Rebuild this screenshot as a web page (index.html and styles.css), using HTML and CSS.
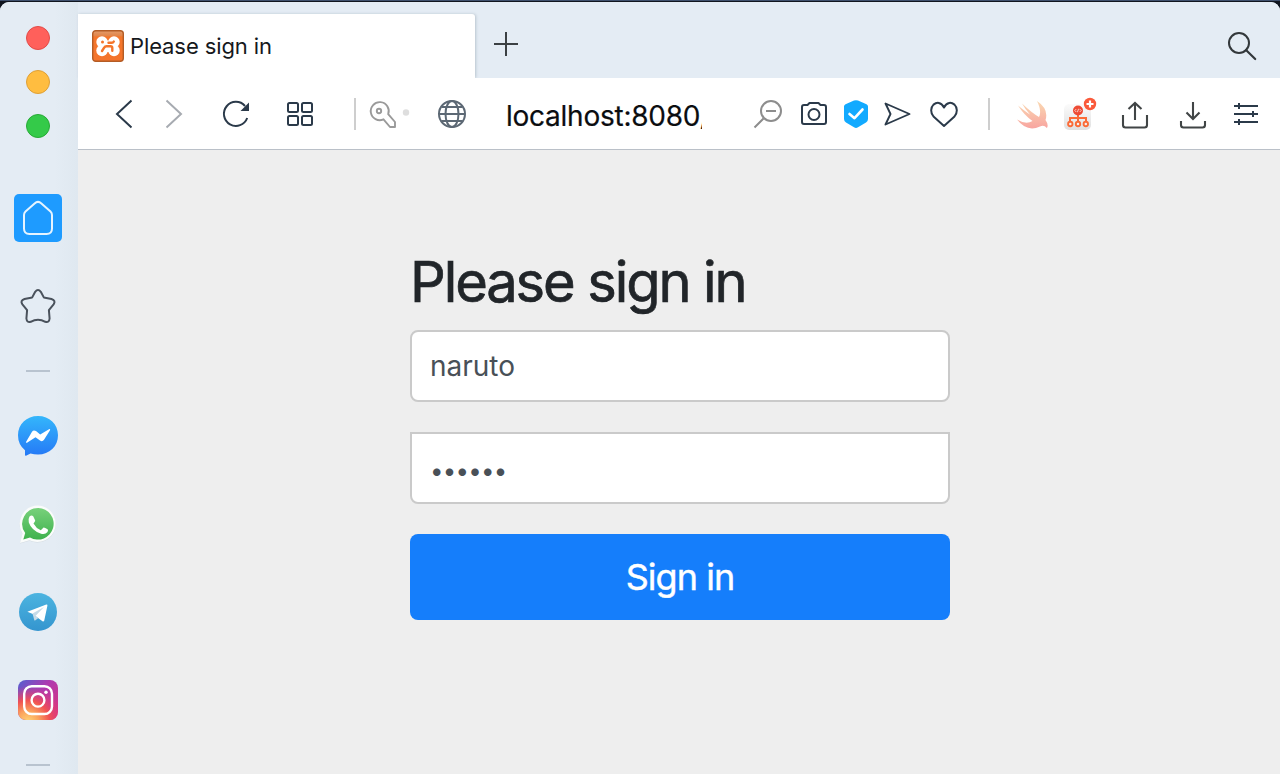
FILE: index.html
```html
<!DOCTYPE html>
<html lang="en">
<head>
<meta charset="utf-8">
<title>Please sign in</title>
<link rel="stylesheet" href="styles.css">
</head>
<body>
<div class="window">
  <aside class="sidebar">
    <div class="lights">
      <span class="light light-close"></span>
      <span class="light light-min"></span>
      <span class="light light-max"></span>
    </div>
    <div class="home">
      <svg width="48" height="48" viewBox="14 194 48 48"><path d="M34.6 203.4Q38 200.300 41.400 203.400L50.500 211.400Q52 212.800 52 215V228.500Q52 234 46.500 234H29.500Q24 234 24 228.500V215Q24 212.800 25.500 211.400Z" fill="none" stroke="#e6f4ff" stroke-width="2"/></svg>
    </div>
    <svg class="star" width="40" height="40" viewBox="18 286 40 40"><path d="M35.200 291.800Q38 288 40.800 291.800L43.800 297.400L51.500 299Q56.200 300.600 53.600 304.400L48.900 310.200L49.600 318.500Q49.200 322.800 45.300 321.800Q38 317.600 30.700 321.800Q26.800 322.800 26.400 318.500L27.100 310.200L22.400 304.400Q19.800 300.600 24.500 299L32.200 297.400Z" fill="none" stroke="#4a525c" stroke-width="2" stroke-linejoin="round"/></svg>
    <span class="rule"></span>
    <svg class="messenger" width="40" height="40" viewBox="0 0 40 40">
      <defs><linearGradient id="msg" x2="0" y2="1"><stop offset="0" stop-color="#34b6fb"/><stop offset="1" stop-color="#2579f6"/></linearGradient></defs>
      <path d="M20 0C31.500 0 40 8.200 40 19.300S31.500 38.600 20 38.600Q16 38.600 12.500 37.600L8 39.800Q7 40 7 39V34.300Q0 28.700 0 19.300C0 8.200 8.500 0 20 0Z" fill="url(#msg)"/>
      <path d="M8 26L14 15.700Q15.500 13.500 18 15L22.200 18.500L31 13.200Q32.600 12.700 32 14.200L26 23.700Q24.500 26 22 24.600L17.500 21.200L9 26.700Q7.700 27 8 26Z" fill="#fff"/>
    </svg>
    <svg class="whatsapp" width="40" height="40" viewBox="0 0 40 40">
      <defs><linearGradient id="wa" x2="0" y2="1"><stop offset="0" stop-color="#78d17b"/><stop offset="1" stop-color="#3fb24e"/></linearGradient></defs>
      <path d="M20 2A18.300 18.300 0 1 1 11.500 36.800L2 39.500L4.500 30A18.300 18.300 0 0 1 20 2Z" fill="#cbd3d8" opacity=".7"/>
      <path d="M20 1.500A18.300 18.300 0 1 1 11.500 36.300L2 39L4.500 29.500A18.300 18.300 0 0 1 20 1.500Z" fill="#fafcfb"/>
      <path d="M20.300 4A15.800 15.800 0 1 1 12 33.500L5.300 35.500L7.200 29A15.800 15.800 0 0 1 20.300 4Z" fill="url(#wa)"/>
      <path d="M11.500 12.600Q13.500 10.600 15.200 12.200L17.200 16.600Q17.200 17.800 15.500 19.500Q18 24.200 22.800 26.300L25.300 23.700Q26.200 23.200 29.600 25.200Q30.500 25.800 29.500 28Q27 31 22.500 29.500Q13.500 26.300 10.800 18.500Q10 15 11.500 12.600Z" fill="#fff"/>
    </svg>
    <svg class="telegram" width="38" height="38" viewBox="0 0 38 38">
      <defs><linearGradient id="tg" x2="0" y2="1"><stop offset="0" stop-color="#4cb4e0"/><stop offset="1" stop-color="#3495cf"/></linearGradient></defs>
      <circle cx="19" cy="19" r="19" fill="url(#tg)"/>
      <path d="M8.400 18.700L27.300 11.400Q28.700 11.200 28.400 12.700L25.200 27.800Q24.600 29 23.500 28.300L13.200 20.800Z" fill="#fff"/>
      <path d="M13.500 20.500L15.400 27.400Q15.900 27.800 16.400 27.300L19.400 25.100L16.500 22.900L25 14Z" fill="#c6dbe8"/>
    </svg>
    <svg class="instagram" width="40" height="40" viewBox="0 0 40 40">
      <defs>
        <linearGradient id="ig" x2="1" y2=".9"><stop offset="0" stop-color="#5260d1"/><stop offset=".45" stop-color="#ad3ab1"/><stop offset="1" stop-color="#de347c"/></linearGradient>
        <radialGradient id="igw" cx=".25" cy="1.050" r=".9"><stop offset="0" stop-color="#ffd776"/><stop offset=".3" stop-color="#fba45d"/><stop offset=".6" stop-color="#f05253"/><stop offset="1" stop-color="#df3b7b" stop-opacity="0"/></radialGradient>
      </defs>
      <rect width="40" height="40" rx="8" fill="url(#ig)"/><rect width="40" height="40" rx="8" fill="url(#igw)"/>
      <rect x="6.200" y="6.200" width="27.800" height="27.800" rx="7.500" fill="none" stroke="#fff" stroke-width="2.400"/>
      <circle cx="20" cy="20.200" r="6.400" fill="none" stroke="#fff" stroke-width="2.400"/><circle cx="28" cy="12.200" r="1.700" fill="#fff"/>
    </svg>
    <span class="rule rule-last"></span>
  </aside>

  <div class="main">
    <div class="tabbar">
      <div class="tab">
        <svg class="favicon" width="32" height="32" viewBox="0 0 32 32">
          <defs><linearGradient id="fav" x2="0" y2="1"><stop offset="0" stop-color="#e39b6b"/><stop offset=".16" stop-color="#e2864a"/><stop offset=".2" stop-color="#f4762b"/><stop offset="1" stop-color="#f4742c"/></linearGradient></defs>
          <rect x=".7" y=".7" width="30.600" height="30.600" rx="3" fill="url(#fav)" stroke="#b45c25" stroke-width="1.400"/>
          <g fill="#fff"><circle cx="10" cy="12" r="5.700"/><circle cx="22" cy="12" r="5.700"/><circle cx="10" cy="20.500" r="5.700"/><circle cx="22" cy="20.500" r="5.700"/><rect x="10" y="10.500" width="12" height="11.500"/></g>
          <circle cx="10.500" cy="12" r="1.500" fill="#f4752b"/>
          <path d="M10 21L12 17.800Q13 16.200 14.500 16.200H18.500Q20.300 16.200 20.300 18V20.800M21.800 11.500Q21 13 19.500 12.800H16.500" fill="none" stroke="#f4752b" stroke-width="2.400" stroke-linecap="round"/>
        </svg>
        <span class="tab-title">Please sign in</span>
      </div>
      <svg class="plus" width="24" height="24" viewBox="0 0 24 24"><path d="M12 0V24M0 12H24" stroke="#3b4043" stroke-width="2"/></svg>
      <svg class="search" width="32" height="32" viewBox="1226 30 32 32" fill="none" stroke="#33383b" stroke-width="2"><circle cx="1239" cy="43" r="10"/><path d="M1246 50L1255.200 59" stroke-width="2.200" stroke-linecap="round"/></svg>
    </div>

    <nav class="toolbar">
      <svg class="back" width="24" height="36" viewBox="112 96 24 36"><path d="M131.500 100.500L117 114L131.500 127.500" fill="none" stroke="#2b3a4a" stroke-width="2"/></svg>
      <svg class="forward" width="24" height="36" viewBox="162 96 24 36"><path d="M166.500 100.500L181 114L166.500 127.500" fill="none" stroke="#a7abb1" stroke-width="2"/></svg>
      <svg class="reload" width="32" height="36" viewBox="220 96 32 36"><path d="M247.200 118A12 12 0 1 1 245 106" fill="none" stroke="#2b3a4a" stroke-width="2"/><path d="M249 102.500V111H240.500Z" fill="#2b3a4a"/></svg>
      <svg class="grid" width="32" height="36" viewBox="284 96 32 36"><g fill="none" stroke="#2b3a4a" stroke-width="2"><rect x="288" y="103" width="10" height="9" rx="1.500"/><rect x="302" y="103" width="10" height="9" rx="1.500"/><rect x="288" y="116" width="10" height="9" rx="1.500"/><rect x="302" y="116" width="10" height="9" rx="1.500"/></g></svg>
      <span class="sep sep-left"></span>
      <svg class="key" width="42" height="36" viewBox="368 96 42 36"><g fill="none" stroke="#9a9a9a" stroke-width="1.900"><path d="M383.500 119.300A9 9 0 1 1 388.200 114.200L395 122V127H390Z" stroke-linejoin="round"/><circle cx="379" cy="111" r="2.200"/></g><circle cx="406" cy="112.500" r="3.200" fill="#dedede"/></svg>
      <svg class="globe" width="32" height="36" viewBox="436 96 32 36"><g fill="none" stroke="#5c6874" stroke-width="2"><circle cx="452" cy="114" r="13"/><ellipse cx="452" cy="114" rx="6.500" ry="13"/><path d="M439 114H465M441.500 107H462.500M441.500 121H462.500"/></g></svg>
      <span class="url">localhost:8080/</span>
      <svg class="zoomout" width="32" height="36" viewBox="752 96 32 36"><g fill="none" stroke="#8d8d8d" stroke-width="2"><circle cx="771" cy="111" r="10"/><path d="M763.500 118.500L754.500 127.500M766 111H776"/></g></svg>
      <svg class="camera" width="32" height="36" viewBox="798 96 32 36"><g fill="none" stroke="#2b3a4a" stroke-width="2"><path d="M804 105H807.500L809.500 103H818.500L820.500 105H824Q826 105 826 107V122Q826 124 824 124H804Q802 124 802 122V107Q802 105 804 105Z" stroke-linejoin="round"/><circle cx="814" cy="114.500" r="5.500"/></g></svg>
      <svg class="shield" width="28" height="36" viewBox="842 96 28 36"><path d="M854 100.600Q856 99.700 858 100.600L866.500 104.300Q868 105 868 106.500V119Q868 121.200 866 122.500L858 127.300Q856 128.500 854 127.300L846 122.500Q844 121.200 844 119V106.500Q844 105 845.500 104.300Z" fill="#12aaff"/><path d="M849.500 114L854.500 118.200L862.500 109.500" fill="none" stroke="#fff" stroke-width="2.600" stroke-linecap="round" stroke-linejoin="round"/></svg>
      <svg class="send" width="30" height="36" viewBox="882 96 30 36"><path d="M885.500 103.500L909.500 114L885.500 124.500L890.500 114Z" fill="none" stroke="#2b3a4a" stroke-width="1.900" stroke-linejoin="round"/></svg>
      <svg class="heart" width="32" height="36" viewBox="928 96 32 36"><path d="M944 107.500C941 101.500 936.500 102.200 933.500 104.600C930.500 107.500 930.300 112.500 933.500 116.500L944 126L954.500 116.500C957.700 112.500 957.500 107.500 954.500 104.600C951.500 102.200 947 101.500 944 107.500Z" fill="none" stroke="#2b3a4a" stroke-width="2" stroke-linejoin="round"/></svg>
      <span class="sep sep-right"></span>
      <svg class="swift" width="32" height="36" viewBox="1016 96 32 36">
        <defs><linearGradient id="sw" x2="0" y2="1"><stop offset="0" stop-color="#fad9b2"/><stop offset="1" stop-color="#f8a5a0"/></linearGradient></defs>
        <path d="M1037 101Q1049 109 1045.500 120Q1049 125 1046.800 128Q1044 124.500 1040 126.500Q1027 132.500 1017 119.500Q1026 125 1032.500 121Q1024 115 1018 105.500Q1026 112 1030 114.500Q1025 109 1022 103.500Q1032 113 1039 117Q1042 111 1037 101Z" fill="url(#sw)"/>
      </svg>
      <svg class="tree" width="38" height="36" viewBox="1062 96 38 36">
        <defs><linearGradient id="tile" x2="0" y2="1"><stop offset="0" stop-color="#fbfbfb"/><stop offset="1" stop-color="#e0e0e0"/></linearGradient></defs>
        <rect x="1064" y="104" width="27" height="26" rx="5" fill="url(#tile)"/>
        <path d="M1078 112V121M1070 121V118H1086V121" fill="none" stroke="#fb6b37" stroke-width="2"/>
        <g fill="#f4efed" stroke="#fb6b37" stroke-width="1.900"><circle cx="1070.300" cy="124" r="2.200"/><circle cx="1078" cy="124" r="2.200"/><circle cx="1085.800" cy="124" r="2.200"/></g>
        <circle cx="1078" cy="110.500" r="5" fill="#ee4b34"/><path d="M1076.300 109L1074.800 110.500L1076.300 112M1079.700 109L1081.200 110.500L1079.700 112M1078.600 108.800L1077.400 112.200" fill="none" stroke="#fff" stroke-width=".7"/>
        <circle cx="1090" cy="104" r="6.200" fill="#fa5a3b"/><path d="M1090 100.500V107.500M1086.500 104H1093.500" stroke="#fff" stroke-width="2.200"/>
      </svg>
      <svg class="share" width="30" height="36" viewBox="1120 96 30 36"><path d="M1123 115V125Q1123 127.500 1125.500 127.500H1144.500Q1147 127.500 1147 125V115M1135 120V103.500M1128.500 109L1135 103L1141.500 109" fill="none" stroke="#414546" stroke-width="2.100"/></svg>
      <svg class="download" width="30" height="36" viewBox="1178 96 30 36"><path d="M1181 121V125Q1181 127.500 1183.500 127.500H1202.500Q1205 127.500 1205 125V121M1193 102V119M1186.500 112.500L1193 119L1199.500 112.500" fill="none" stroke="#414546" stroke-width="2.100"/></svg>
      <svg class="sliders" width="28" height="36" viewBox="1232 96 28 36"><path d="M1234 106H1258M1234 114H1258M1234 122H1258M1239 103V109M1253 111V117M1239 119V125" fill="none" stroke="#2b3a4a" stroke-width="2"/></svg>
    </nav>

    <main class="page">
      <form class="signin">
        <h2 class="heading">Please sign in</h2>
        <div class="field field-user">naruto</div>
        <div class="field field-pass"><span class="dots">••••••</span></div>
        <button class="submit" type="button"><span>Sign in</span></button>
      </form>
    </main>
  </div>
</div>
</body>
</html>
```
FILE: styles.css
```css
* { box-sizing: border-box; }
body {
  margin: 0;
  height: 774px;
  overflow: hidden;
  background: #10151f;
  border-top: 1px solid #3f506d;
  padding-top: 1px;
  font-family: Inter, "Liberation Sans", sans-serif;
}
svg { display: block; flex: none; }
.window {
  display: flex;
  height: 772px;
  background: #e4ecf4;
  border-radius: 9px 9px 0 0;
  overflow: hidden;
}
.sidebar {
  width: 78px;
  flex: none;
  padding: 24px 2px 0 0;
  display: flex;
  flex-direction: column;
  align-items: center;
  background: linear-gradient(90deg, #e4ecf4 55px, #dfe8f0 78px);
}
.lights { display: grid; gap: 20px; }
.light { width: 24px; height: 24px; border-radius: 50%; border: 1px solid; }
.light-close { background: #ff605b; border-color: #e24b48; }
.light-min { background: #ffbd40; border-color: #dfa036; }
.light-max { background: #34ca49; border-color: #27aa36; }
.home { width: 48px; height: 48px; margin-top: 56px; border-radius: 5px; background: #1e9bff; }
.star { margin-top: 44px; }
.rule { width: 24px; height: 2px; flex: none; margin-top: 44px; background: #b8c3cf; }
.messenger { margin-top: 44px; }
.whatsapp { margin-top: 48px; }
.telegram { margin-top: 49px; }
.instagram { margin-top: 49px; }
.main { flex: 1; min-width: 0; display: flex; flex-direction: column; }
.tabbar { height: 76px; flex: none; display: flex; align-items: flex-start; padding-top: 12px; background: #e4ecf4; }
.tab {
  width: 397px;
  height: 64px;
  padding-left: 14px;
  display: flex;
  align-items: center;
  background: #fff;
  border-radius: 0 3px 0 0;
  box-shadow: 1px 0 3px #b9c5cf;
}
.tab-title { margin-left: 6px; font-size: 22px; line-height: 32px; letter-spacing: -.1px; color: #15181c; white-space: nowrap; }
.plus { margin: 18px 0 0 19px; }
.search { margin: 16px 22px 0 auto; }
.toolbar { position: relative; height: 72px; flex: none; display: flex; align-items: flex-start; padding: 18px 0 0 34px; background: #fff; border-bottom: 1px solid #bac0c8; }
.forward { margin-left: 26px; }
.reload { margin-left: 34px; }
.grid { margin-left: 32px; }
.sep { width: 2px; height: 32px; margin-top: 2px; background: #cecece; flex: none; }
.sep-left { margin-left: 38px; }
.key { margin-left: 12px; }
.globe { margin-left: 26px; }
.url { width: 196px; margin-left: 38px; flex: none; overflow: hidden; white-space: nowrap; font-size: 28px; line-height: 41px; letter-spacing: -.25px; color: #0b0d10; -webkit-text-stroke: .2px; }
.zoomout { margin-left: 50px; }
.camera { margin-left: 14px; }
.shield { margin-left: 12px; }
.send { margin-left: 12px; }
.heart { margin-left: 16px; }
.sep-right { margin-left: 28px; }
.swift { margin-left: 26px; }
.tree { margin-left: 14px; }
.share { margin-left: 20px; }
.download { margin-left: 28px; }
.sliders { margin-left: 24px; }
.page { flex: 1; padding: 99px 0 0 332px; background: #eee; }
.signin { width: 540px; display: flex; flex-direction: column; }
.heading { margin: 0 0 14px; font-size: 56px; line-height: 67px; font-weight: 400; letter-spacing: -2.1px; color: #212529; white-space: nowrap; -webkit-text-stroke: .7px; }
.field { height: 72px; padding: 0 18px; border: 2px solid #cacaca; background: #fff; font-size: 28px; line-height: 68px; color: #495057; }
.field-user { border-radius: 8px; }
.field-pass { margin-top: 30px; border-radius: 0 0 8px 8px; }
.dots { display: block; font-size: 24px; line-height: 73px; letter-spacing: -.75px; }
.submit { height: 86px; margin-top: 30px; padding: 0; border: 0; border-radius: 8px; background: #157efb; color: #fff; font: 400 36px/86px Inter, "Liberation Sans", sans-serif; letter-spacing: -.95px; -webkit-text-stroke: .4px; }
```
